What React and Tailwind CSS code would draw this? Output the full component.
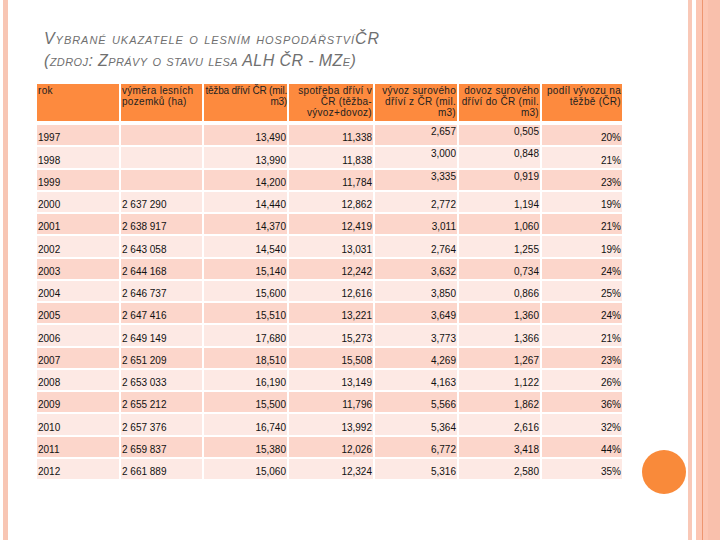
import React from "react";

const rows = [
  ["1997", "", "13,490", "11,338", "2,657", "0,505", "20%"],
  ["1998", "", "13,990", "11,838", "3,000", "0,848", "21%"],
  ["1999", "", "14,200", "11,784", "3,335", "0,919", "23%"],
  ["2000", "2 637 290", "14,440", "12,862", "2,772", "1,194", "19%"],
  ["2001", "2 638 917", "14,370", "12,419", "3,011", "1,060", "21%"],
  ["2002", "2 643 058", "14,540", "13,031", "2,764", "1,255", "19%"],
  ["2003", "2 644 168", "15,140", "12,242", "3,632", "0,734", "24%"],
  ["2004", "2 646 737", "15,600", "12,616", "3,850", "0,866", "25%"],
  ["2005", "2 647 416", "15,510", "13,221", "3,649", "1,360", "24%"],
  ["2006", "2 649 149", "17,680", "15,273", "3,773", "1,366", "21%"],
  ["2007", "2 651 209", "18,510", "15,508", "4,269", "1,267", "23%"],
  ["2008", "2 653 033", "16,190", "13,149", "4,163", "1,122", "26%"],
  ["2009", "2 655 212", "15,500", "11,796", "5,566", "1,862", "36%"],
  ["2010", "2 657 376", "16,740", "13,992", "5,364", "2,616", "32%"],
  ["2011", "2 659 837", "15,380", "12,026", "6,772", "3,418", "44%"],
  ["2012", "2 661 889", "15,060", "12,324", "5,316", "2,580", "35%"],
];

const headers = [
  { lines: ["rok"], right: false },
  { lines: ["výměra lesních", "pozemků (ha)"], right: false },
  { lines: ["těžba dříví ČR (mil.", "m3)"], right: true },
  { lines: ["spotřeba dříví v", "ČR (těžba-", "vývoz+dovoz)"], right: true },
  { lines: ["vývoz surového", "dříví z ČR (mil.", "m3)"], right: true },
  { lines: ["dovoz surového", "dříví do ČR (mil.", "m3)"], right: true },
  { lines: ["podíl vývozu na", "těžbě (ČR)"], right: true },
];

const gridCols = "grid grid-cols-[82px_81px_83px_84px_82px_81px_80px] gap-x-[2px]";

function Cell({ value, col, row }) {
  const top = row < 3 && (col === 4 || col === 5);
  const right = col >= 2;
  return (
    <div
      className={
        "flex px-[1px] text-[10px] leading-[12px] text-[#111] whitespace-nowrap " +
        (row % 2 === 0 ? "bg-[#fcd6cb] " : "bg-[#fde9e4] ") +
        (top ? "items-start pt-[1px] " : "items-end pb-[1px] ") +
        (right ? "justify-end pr-[1px]" : "justify-start")
      }
    >
      {value}
    </div>
  );
}

export default function App() {
  return (
    <div className="w-[720px] h-[540px] bg-white flex overflow-hidden font-['Liberation_Sans',Arial,sans-serif]">
      <div className="w-[3px]" />
      <div className="w-[5px] bg-[#f8c6b4]" />

      <div className="flex-1 flex flex-col pl-[29px] pt-[28px]">
        <div className="pl-[7px] text-[16px] leading-[21.5px] italic text-[#707070] [font-variant:small-caps]">
          <div className="tracking-[0.95px]">Vybrané ukazatele o lesním hospodářstvíČR</div>
          <div className="tracking-[0.4px]">(zdroj: Zprávy o stavu lesa ALH ČR - MZe)</div>
        </div>

        <div className="flex items-start mt-[13px]">
          <div className="flex flex-col">
            <div className={gridCols + " h-[37px]"}>
              {headers.map((h, i) => (
                <div
                  key={i}
                  className={
                    "bg-[#fd8a3e] pt-[1px] text-[10px] leading-[11px] text-[#222] whitespace-nowrap flex flex-col " +
                    (i === 2 ? "tracking-[-0.2px] px-0 " : "tracking-[0.3px] px-[1px] ") +
                    (h.right ? "items-end" : "items-start")
                  }
                >
                  {h.lines.map((l, j) => (
                    <span key={j}>{l}</span>
                  ))}
                </div>
              ))}
            </div>

            <div className={gridCols + " auto-rows-[20.25px] gap-y-[2px] mt-[4px]"}>
              {rows.map((r, ri) =>
                r.map((v, ci) => <Cell key={ri + "-" + ci} value={v} col={ci} row={ri} />)
              )}
            </div>
          </div>

          <div className="pl-[20px] pt-[366px]">
            <div className="w-[44px] h-[44px] rounded-full bg-[#f98a3a]" />
          </div>
        </div>
      </div>

      <div className="flex">
        <div className="w-[4px] bg-[#f9c8b7]" />
        <div className="w-[4px] bg-white" />
        <div className="w-[6px] bg-[#fcc6b3]" />
        <div className="w-[1px] bg-[#ee9670]" />
        <div className="w-[5px] bg-[#fcc6b3]" />
        <div className="w-[12px] bg-[#f9c0ac]" />
      </div>
    </div>
  );
}
